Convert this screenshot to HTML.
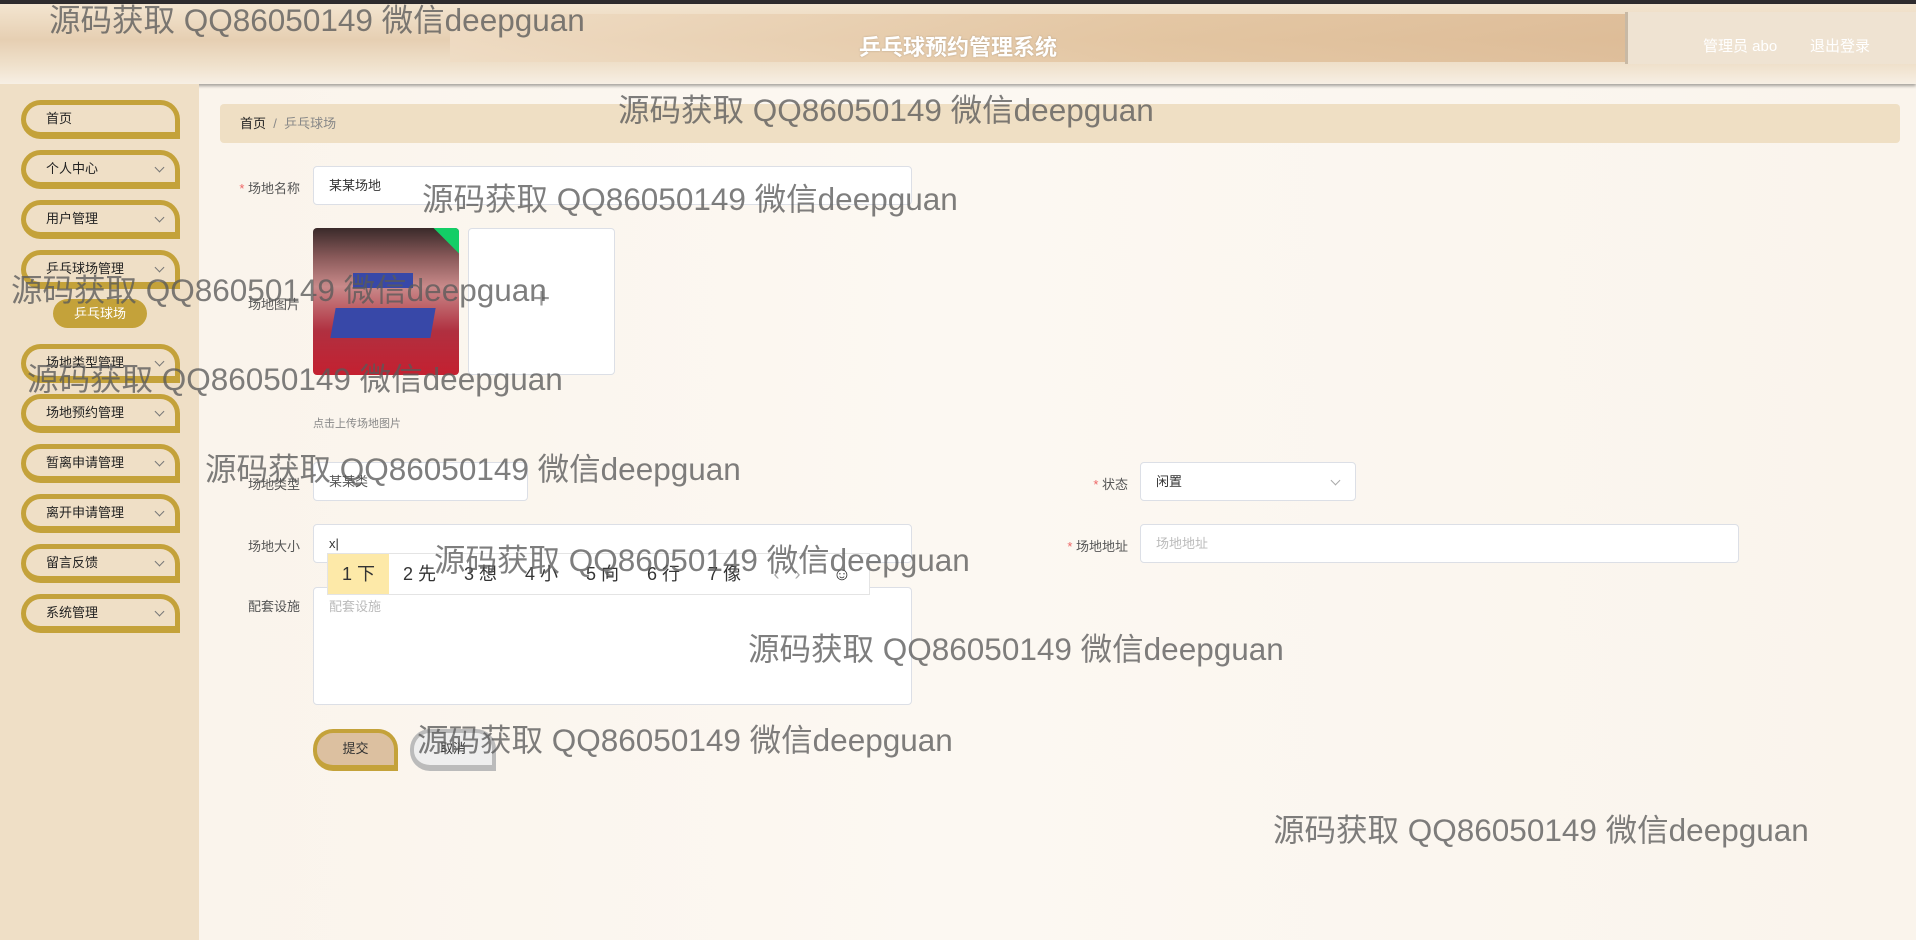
<!DOCTYPE html>
<html><head><meta charset="utf-8"><style>
*{margin:0;padding:0;box-sizing:border-box}
body{width:1916px;height:940px;overflow:hidden;position:relative;font-family:"Liberation Sans","Noto Sans CJK SC",sans-serif;background:linear-gradient(90deg,#faf3ea,#fcf8f2 50%,#faf4ec);}
.top{position:absolute;left:0;top:0;width:1916px;height:4px;background:#2e2c2e}
.hdr{position:absolute;left:0;top:4px;width:1916px;height:80px;background:linear-gradient(180deg,#f3e5d0 0%,#e6cfb2 45%,#efe0ca 75%,#f7efe4 100%);box-shadow:0 2px 3px rgba(0,0,0,.35)}
.hdr .band{position:absolute;left:450px;top:10px;width:1180px;height:48px;background:linear-gradient(90deg,#efdcc4,#e2c39e 60%,#dcb993);opacity:.85}
.hdr .r{position:absolute;left:1625px;top:8px;width:291px;height:52px;background:#efe3d2;border-left:3px solid #c8b9a5}
.title{position:absolute;left:0;width:1916px;top:30px;text-align:center;color:#fff;font-size:22px;font-weight:bold;text-shadow:0 0 2px rgba(0,0,0,.2)}
.user{position:absolute;top:35px;color:#fff;font-size:15px}
.side{position:absolute;left:0;top:84px;width:199px;height:856px;background:#efdfc6}
.mi{position:absolute;left:21px;width:159px;height:39px;border:5px solid #c4a23a;border-bottom-width:7px;border-radius:22px 22px 0 22px;font-size:13px;color:#222;padding-left:20px;line-height:28px}
.mi .ch{position:absolute;right:12px;top:1px;width:7px;height:7px;border-right:1px solid #777;border-bottom:1px solid #777;transform:rotate(45deg);top:9px}
.sub{position:absolute;left:53px;top:299px;width:94px;height:29px;border-radius:15px;background:#c4a23a;color:#fff;font-size:13px;text-align:center;line-height:29px}
.bc{position:absolute;left:220px;top:104px;width:1680px;height:39px;background:#efdfc4;border-radius:4px;font-size:13px;line-height:39px;padding-left:20px;color:#333}
.bc span{color:#888}
.lbl{position:absolute;font-size:13px;color:#555;text-align:right;width:110px}
.lbl b{color:#e66;font-weight:normal}
.in{position:absolute;background:#fff;border:1px solid #dcdfe6;border-radius:4px;font-size:13px;color:#555;padding-left:15px}
.ph{color:#bbb}
.wm{position:absolute;font-size:31.5px;color:rgba(90,90,90,.78);white-space:nowrap;line-height:1}
.ime span.c{display:inline-block;width:61px;text-align:center}
</style></head><body>
<div class="top"></div>
<div class="hdr"><div class="band"></div><div class="r"></div></div>
<div class="title">乒乓球预约管理系统</div>
<div class="user" style="left:1703px">管理员 abo</div>
<div class="user" style="left:1810px">退出登录</div>

<div class="side"></div>
<div class="mi" style="top:100px">首页</div>
<div class="mi" style="top:150px">个人中心<span class="ch"></span></div>
<div class="mi" style="top:200px">用户管理<span class="ch"></span></div>
<div class="mi" style="top:250px">乒乓球场管理<span class="ch"></span></div>
<div class="sub">乒乓球场</div>
<div class="mi" style="top:344px">场地类型管理<span class="ch"></span></div>
<div class="mi" style="top:394px">场地预约管理<span class="ch"></span></div>
<div class="mi" style="top:444px">暂离申请管理<span class="ch"></span></div>
<div class="mi" style="top:494px">离开申请管理<span class="ch"></span></div>
<div class="mi" style="top:544px">留言反馈<span class="ch"></span></div>
<div class="mi" style="top:594px">系统管理<span class="ch"></span></div>

<div class="bc"><b style="font-weight:normal;color:#222">首页</b> &nbsp;<span>/</span>&nbsp; <span>乒乓球场</span></div>

<div class="lbl" style="left:190px;top:178px"><b>*</b> 场地名称</div>
<div class="in" style="left:313px;top:166px;width:599px;height:39px;line-height:37px;color:#333">某某场地</div>

<div class="lbl" style="left:190px;top:294px">场地图片</div>
<div style="position:absolute;left:313px;top:228px;width:146px;height:147px;border-radius:4px;overflow:hidden;background:linear-gradient(180deg,#3a2a2a 0%,#8a5a5a 20%,#c98a8a 40%,#b03040 70%,#c42030 100%)">
 <div style="position:absolute;left:20px;top:80px;width:100px;height:30px;background:#3848a8;transform:skewX(-10deg)"></div>
 <div style="position:absolute;left:40px;top:45px;width:60px;height:15px;background:#3848a8"></div>
 <div style="position:absolute;right:-18px;top:-18px;width:36px;height:36px;background:#13ce66;transform:rotate(45deg)"></div>
</div>
<div style="position:absolute;left:468px;top:228px;width:147px;height:147px;background:#fff;border:1px solid #dcdfe6;border-radius:4px;color:#999;font-size:30px;text-align:center;line-height:140px;font-weight:100">+</div>
<div style="position:absolute;left:313px;top:415px;font-size:11px;color:#888">点击上传场地图片</div>

<div class="lbl" style="left:190px;top:474px">场地类型</div>
<div class="in" style="left:313px;top:462px;width:215px;height:39px;line-height:37px">某某类</div>
<div class="lbl" style="left:1018px;top:474px"><b>*</b> 状态</div>
<div class="in" style="left:1140px;top:462px;width:216px;height:39px;line-height:37px;color:#333">闲置<span style="position:absolute;right:16px;top:14px;width:7px;height:7px;border-right:1px solid #aaa;border-bottom:1px solid #aaa;transform:rotate(45deg)"></span></div>

<div class="lbl" style="left:190px;top:536px">场地大小</div>
<div class="in" style="left:313px;top:524px;width:599px;height:39px;line-height:37px;color:#333">x|</div>
<div class="lbl" style="left:1018px;top:536px"><b>*</b> 场地地址</div>
<div class="in ph" style="left:1140px;top:524px;width:599px;height:39px;line-height:37px">场地地址</div>

<div class="lbl" style="left:190px;top:596px">配套设施</div>
<div class="in ph" style="left:313px;top:587px;width:599px;height:118px;padding-top:8px">配套设施</div>

<div class="ime" style="position:absolute;left:327px;top:553px;width:543px;height:42px;background:#fff;border:1px solid #e4e4e4;font-size:18px;color:#333;line-height:40px;white-space:nowrap">
<span class="c" style="background:#fde9a8;height:40px">1 下</span><span class="c">2 先</span><span class="c">3 想</span><span class="c">4 小</span><span class="c">5 向</span><span class="c">6 行</span><span class="c">7 像</span><span class="c" style="color:#aaa;width:64px">‹ &nbsp; ›</span><span class="c" style="width:46px">☺</span></div>

<div style="position:absolute;left:313px;top:729px;width:85px;height:42px;background:#dcc0a0;border:4px solid #c4a23a;border-bottom-width:6px;border-radius:20px 20px 0 20px;font-size:13px;text-align:center;line-height:32px;color:#333">提交</div>
<div style="position:absolute;left:410px;top:729px;width:86px;height:42px;background:#eee;border:4px solid #bbb;border-bottom-width:6px;border-radius:20px 20px 0 20px;font-size:13px;text-align:center;line-height:32px;color:#333">取消</div>

<div class="wm" style="left:49px;top:5px">源码获取 QQ86050149 微信deepguan</div>
<div class="wm" style="left:618px;top:95px">源码获取 QQ86050149 微信deepguan</div>
<div class="wm" style="left:422px;top:184px">源码获取 QQ86050149 微信deepguan</div>
<div class="wm" style="left:11px;top:275px">源码获取 QQ86050149 微信deepguan</div>
<div class="wm" style="left:27px;top:364px">源码获取 QQ86050149 微信deepguan</div>
<div class="wm" style="left:205px;top:454px">源码获取 QQ86050149 微信deepguan</div>
<div class="wm" style="left:434px;top:545px">源码获取 QQ86050149 微信deepguan</div>
<div class="wm" style="left:748px;top:634px">源码获取 QQ86050149 微信deepguan</div>
<div class="wm" style="left:417px;top:725px">源码获取 QQ86050149 微信deepguan</div>
<div class="wm" style="left:1273px;top:815px">源码获取 QQ86050149 微信deepguan</div>
</body></html>
